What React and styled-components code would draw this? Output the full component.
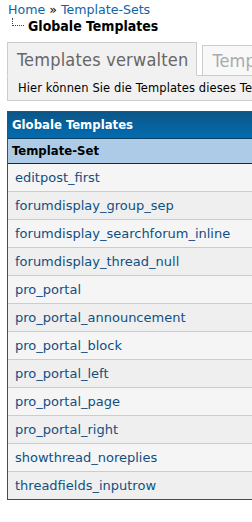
import React from "react";
import styled, { createGlobalStyle } from "styled-components";

const Global = createGlobalStyle`
  html, body { margin: 0; padding: 0; background: #fff; overflow: hidden; }
  body { font-family: "DejaVu Sans Condensed", "DejaVu Sans", Verdana, sans-serif; }
`;

const Page = styled.div`
  width: 720px;
  padding: 2px 0 0 7px;
`;

const Breadcrumb = styled.div`
  font-family: "DejaVu Sans", Verdana, sans-serif;
  font-size: 12.6px;
  line-height: 16px;
  padding-left: 1px;
`;

const Crumb = styled.a`
  color: #0d65a8;
  text-decoration: none;
`;

const Current = styled.div`
  display: flex;
  align-items: flex-start;
  font-weight: bold;
  font-size: 14px;
  line-height: 16px;
  color: #000;
`;

const Tree = styled.span`
  display: inline-block;
  width: 11px;
  height: 7px;
  margin: 0 4px 0 5px;
  border-left: 1px dotted #444;
  border-bottom: 1px dotted #444;
`;

const TabList = styled.div`
  display: flex;
  align-items: flex-end;
  gap: 5px;
  margin-top: 8px;
`;

const Tab = styled.div`
  font-size: 18px;
  line-height: 21px;
  letter-spacing: 0.2px;
  padding: ${(p) => (p.$active ? "6px 8px 5px 9px" : "4px 8px 4px 9px")};
  color: ${(p) => (p.$active ? "#666" : "#aaa")};
  background: ${(p) => (p.$active ? "#f1f1f1" : "#f8f8f8")};
  border: 1px solid #ccc;
  border-bottom: ${(p) => (p.$active ? "1px solid #f1f1f1" : "0")};
  margin-bottom: ${(p) => (p.$active ? "-1px" : "0")};
  position: relative;
  z-index: ${(p) => (p.$active ? 1 : 0)};
  white-space: nowrap;
`;

const TabDesc = styled.div`
  font-family: "DejaVu Sans", Verdana, sans-serif;
  font-size: 11.5px;
  letter-spacing: 0.1px;
  line-height: 14px;
  padding: 5px 10px 5px 10px;
  background: #f1f1f1;
  border: 1px solid #ccc;
  color: #000;
  white-space: nowrap;
`;

const Table = styled.div`
  margin-top: 10px;
  border: 1px solid #0f5b8e;
`;

const Head = styled.div`
  background: linear-gradient(#0d5687, #026cb1);
  color: #fff;
  font-weight: bold;
  font-size: 13px;
  line-height: 16px;
  padding: 5px 4px 5px 4px;
  border-bottom: 1px solid #0e3d5e;
`;

const SubHead = styled.div`
  background: #adcbe6;
  color: #000;
  font-weight: bold;
  font-size: 13px;
  line-height: 16px;
  padding: 4px 4px 4px 4px;
  border-bottom: 1px solid #0e2c44;
`;

const Row = styled.div`
  background: ${(p) => (p.$alt ? "#efefef" : "#f5f5f5")};
  border-bottom: ${(p) => (p.$last ? "0" : "1px solid #ccc")};
  font-family: "DejaVu Sans", Verdana, sans-serif;
  font-size: 13px;
  line-height: 17px;
  padding: 5px 7px 5px 7px;
`;

const RowLink = styled.a`
  color: #0f4f82;
  text-decoration: none;
`;

const templates = [
  "editpost_first",
  "forumdisplay_group_sep",
  "forumdisplay_searchforum_inline",
  "forumdisplay_thread_null",
  "pro_portal",
  "pro_portal_announcement",
  "pro_portal_block",
  "pro_portal_left",
  "pro_portal_page",
  "pro_portal_right",
  "showthread_noreplies",
  "threadfields_inputrow",
];

export default function App() {
  return (
    <>
      <Global />
      <Page>
        <Breadcrumb>
          <Crumb href="#">Home</Crumb> » <Crumb href="#">Template-Sets</Crumb>
        </Breadcrumb>
        <Current>
          <Tree />
          Globale Templates
        </Current>
        <TabList>
          <Tab $active>Templates verwalten</Tab>
          <Tab>Template hinzufügen</Tab>
          <Tab>Suchen/Ersetzen</Tab>
        </TabList>
        <TabDesc>
          Hier können Sie die Templates dieses Template-Sets verwalten und bearbeiten.
        </TabDesc>
        <Table>
          <Head>Globale Templates</Head>
          <SubHead>Template-Set</SubHead>
          {templates.map((t, i) => (
            <Row key={t} $alt={i % 2 === 1} $last={i === templates.length - 1}>
              <RowLink href="#">{t}</RowLink>
            </Row>
          ))}
        </Table>
      </Page>
    </>
  );
}
